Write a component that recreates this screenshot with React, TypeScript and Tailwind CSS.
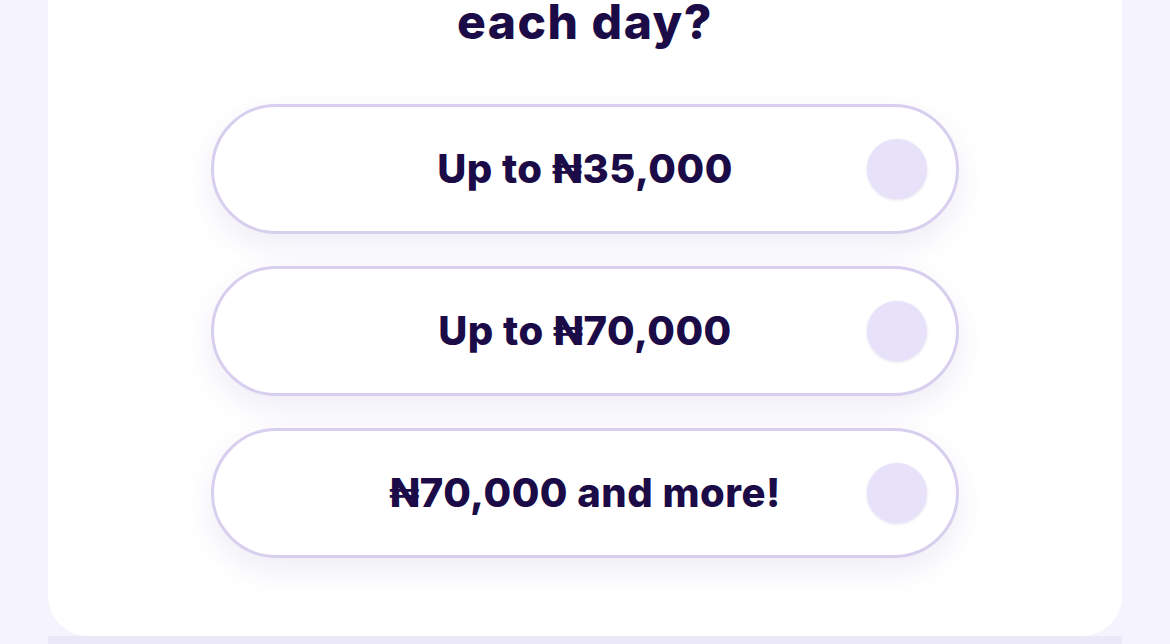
const options = ['Up to ₦35,000', 'Up to ₦70,000', '₦70,000 and more!']

function Option({ label }: { label: string }) {
  return (
    <div className="w-[748px] h-[130px] rounded-full border-[3px] border-[#d8cfef] bg-white shadow-[0_12px_30px_rgba(70,50,150,0.09)] flex items-center px-[29px]">
      <div className="w-[60px] shrink-0" />
      <div className="flex-1 text-center text-[40px] font-extrabold tracking-[0.5px] text-[#1b0b47]">{label}</div>
      <div className="w-[60px] h-[60px] shrink-0 rounded-full bg-[#e7e2f9] shadow-[0_1px_3px_rgba(90,70,170,0.18)]" />
    </div>
  )
}

export default function App() {
  return (
    <div className="w-[1170px] h-[644px] overflow-hidden bg-[#f5f3fd] font-['Inter','Noto_Sans',sans-serif]">
      <div className="ml-[48px] w-[1074px] h-[636px] bg-white rounded-b-[40px] flex flex-col items-center">
        <h1 className="-mt-[6px] text-[48px] leading-[56px] font-extrabold tracking-[1.5px] text-[#1b0b47]">each day?</h1>
        <div className="mt-[54px] flex flex-col gap-[32px]">
          {options.map(o => <Option key={o} label={o} />)}
        </div>
      </div>
      <div className="ml-[48px] w-[1074px] h-[20px] bg-[#ebe8f8]" />
    </div>
  )
}
